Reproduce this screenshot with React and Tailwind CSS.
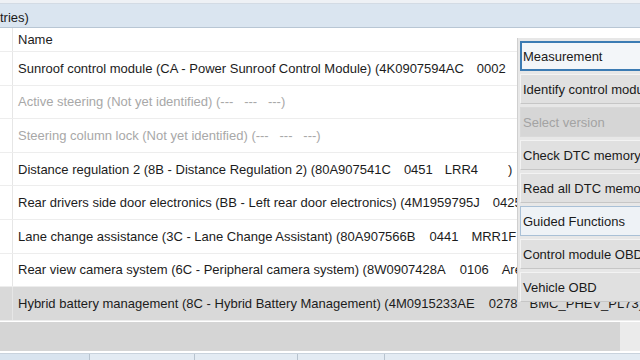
import React from 'react';

const rows = [
  { parts: ['Sunroof control module (CA - Power Sunroof Control Module) (4K0907594AC', '0002'], gaps: [13] },
  { parts: ['Active steering (Not yet identified) (---   ---   ---)'], disabled: true },
  { parts: ['Steering column lock (Not yet identified) (---   ---   ---)'], disabled: true },
  { parts: ['Distance regulation 2 (8B - Distance Regulation 2) (80A907541C', '0451', 'LRR4', ')'], gaps: [13, 12, 30] },
  { parts: ['Rear drivers side door electronics (BB - Left rear door electronics) (4M1959795J', '0425'], gaps: [13] },
  { parts: ['Lane change assistance (3C - Lane Change Assistant) (80A907566B', '0441', 'MRR1F'], gaps: [14, 13] },
  { parts: ['Rear view camera system (6C - Peripheral camera system) (8W0907428A', '0106', 'Area'], gaps: [14, 13] },
  { parts: ['Hybrid battery management (8C - Hybrid Battery Management) (4M0915233AE', '0278', 'BMC_PHEV_PL73)'], gaps: [14, 12], selected: true },
];

const menu = [
  { label: 'Measurement', kind: 'active' },
  { label: 'Identify control module' },
  { label: 'Select version', kind: 'disabled' },
  { label: 'Check DTC memory' },
  { label: 'Read all DTC memory' },
  { label: 'Guided Functions', kind: 'soft' },
  { label: 'Control module OBD' },
  { label: 'Vehicle OBD' },
];

const menuClass = {
  active: 'border-2 border-[#3b7bb3] bg-[#f3f6f9] text-[#1a1a1a] pl-px',
  disabled: 'border border-[#d9d9d9] bg-[#d6d6d6] text-[#a3a3a3] pl-[2px]',
  soft: 'border border-[#a9c0d6] bg-[#eef2f6] text-[#1a1a1a] pl-[2px]',
  normal: 'border border-t-[#f3f3f3] border-l-[#f3f3f3] border-r-[#d0d0d0] border-b-[#c6c6c6] bg-[#e0e0e0] text-[#1a1a1a] pl-[2px]',
};

// one line of the module list: narrow marker column, then the module text
const Row = ({ row }) => (
  <div
    className={`flex h-[33.6px] items-center border-b border-[#ededed] ${
      row.selected ? 'bg-[#d9d9d9]' : 'bg-white'
    }`}
  >
    <div className="h-full w-[13px] shrink-0 border-r border-[#e6e6e6]" />
    <div
      className={`flex whitespace-pre pl-[5px] ${row.disabled ? 'text-[#a8a8a8]' : 'text-[#1c1c1c]'}`}
    >
      {row.parts.map((p, i) => (
        <span key={i} style={{ marginLeft: i === 0 ? 0 : row.gaps[i - 1] }}>
          {p}
        </span>
      ))}
    </div>
  </div>
);

export default function App() {
  return (
    <div className="relative h-[360px] w-[640px] overflow-hidden bg-white font-['Liberation_Sans',Arial,sans-serif] text-[13px] leading-none">
      <div className="h-[4px] border-b border-[#d3dbe4] bg-[#eef1f5]" />
      <div className="flex h-[24px] items-center border-b border-[#b8c6d4] bg-[#dae5f0] pt-[3px] text-[#1a1a1a]">
        tries)
      </div>

      <div className="flex h-[24px] items-center border-b border-[#ededed]">
        <div className="h-full w-[13px] shrink-0 border-r border-[#e6e6e6]" />
        <span className="pl-[5px] text-[#1c1c1c]">Name</span>
      </div>
      {rows.map((row, i) => (
        <Row key={i} row={row} />
      ))}

      <div className="mt-px flex h-[29px]">
        <div className="w-[620px] bg-[#d5d5d5]" />
        <div className="flex-1 bg-[#ebebeb]" />
      </div>
      <div className="mt-[2px] flex h-[8px] border-t border-[#c9d3dd] bg-[#e3ebf3]">
        <div className="w-[90px] border-r border-[#b7c3cf] bg-[#d9e4ef]" />
        <div className="w-[105px] border-r border-[#b7c3cf]" />
        <div className="w-[103px] border-r border-[#b7c3cf]" />
        <div className="w-[87px] border-r border-[#b7c3cf]" />
        <div className="flex-1" />
      </div>

      <div className="absolute left-[517px] top-[38px] flex h-[264px] w-[140px] flex-col gap-[3px] border-l border-[#cfcfcf] bg-[#e7e7e7] pl-[2px] pt-[3px]">
        {menu.map((m) => (
          <div
            key={m.label}
            className={`flex h-[30px] shrink-0 items-center whitespace-nowrap ${menuClass[m.kind || 'normal']}`}
          >
            {m.label}
          </div>
        ))}
      </div>
    </div>
  );
}
